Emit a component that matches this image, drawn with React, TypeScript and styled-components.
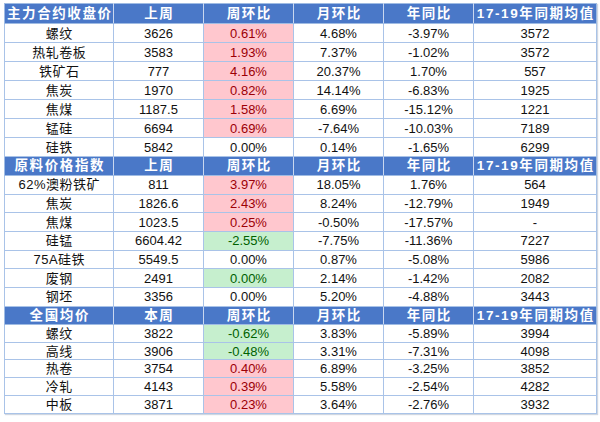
import React from 'react';
import styled, { createGlobalStyle } from 'styled-components';

type Tone = 'up' | 'down' | 'none';

interface Row {
  name: string;
  last: string;
  week: string;
  tone: Tone;
  month: string;
  year: string;
  avg: string;
}

interface Section {
  title: string;
  lastLabel: string;
  headH: number;
  rowH: number;
  rows: Row[];
}

const r = (
  name: string,
  last: string,
  week: string,
  tone: Tone,
  month: string,
  year: string,
  avg: string,
): Row => ({ name, last, week, tone, month, year, avg });

const sections: Section[] = [
  {
    title: '主力合约收盘价',
    lastLabel: '上周',
    headH: 20,
    rowH: 19,
    rows: [
      r('螺纹', '3626', '0.61%', 'up', '4.68%', '-3.97%', '3572'),
      r('热轧卷板', '3583', '1.93%', 'up', '7.37%', '-1.02%', '3572'),
      r('铁矿石', '777', '4.16%', 'up', '20.37%', '1.70%', '557'),
      r('焦炭', '1970', '0.82%', 'up', '14.14%', '-6.83%', '1925'),
      r('焦煤', '1187.5', '1.58%', 'up', '6.69%', '-15.12%', '1221'),
      r('锰硅', '6694', '0.69%', 'up', '-7.64%', '-10.03%', '7189'),
      r('硅铁', '5842', '0.00%', 'none', '0.14%', '-1.65%', '6299'),
    ],
  },
  {
    title: '原料价格指数',
    lastLabel: '上周',
    headH: 19,
    rowH: 18.7,
    rows: [
      r('62%澳粉铁矿', '811', '3.97%', 'up', '18.05%', '1.76%', '564'),
      r('焦炭', '1826.6', '2.43%', 'up', '8.24%', '-12.79%', '1949'),
      r('焦煤', '1023.5', '0.25%', 'up', '-0.50%', '-17.57%', '-'),
      r('硅锰', '6604.42', '-2.55%', 'down', '-7.75%', '-11.36%', '7227'),
      r('75A硅铁', '5549.5', '0.00%', 'none', '0.87%', '-5.08%', '5986'),
      r('废钢', '2491', '0.00%', 'down', '2.14%', '-1.42%', '2082'),
      r('钢坯', '3356', '0.00%', 'none', '5.20%', '-4.88%', '3443'),
    ],
  },
  {
    title: '全国均价',
    lastLabel: '本周',
    headH: 18,
    rowH: 17.8,
    rows: [
      r('螺纹', '3822', '-0.62%', 'down', '3.83%', '-5.89%', '3994'),
      r('高线', '3906', '-0.48%', 'down', '3.31%', '-7.31%', '4098'),
      r('热卷', '3754', '0.40%', 'up', '6.89%', '-3.25%', '3852'),
      r('冷轧', '4143', '0.39%', 'up', '5.58%', '-2.54%', '4282'),
      r('中板', '3871', '0.23%', 'up', '3.64%', '-2.76%', '3932'),
    ],
  },
];

const GlobalStyle = createGlobalStyle`
  body {
    margin: 0;
    background: #fff;
    font-family: "Liberation Sans", "Noto Sans CJK SC", sans-serif;
  }
`;

const Page = styled.div`
  width: 600px;
  height: 422px;
  padding: 3px 0 0 4px;
  box-sizing: border-box;
`;

const Table = styled.table`
  width: 592px;
  table-layout: fixed;
  border-collapse: collapse;
  border: 1px solid #9fbbe3;
  box-shadow: 1px 1px 1px rgba(120, 140, 170, 0.35);
`;

const HeadRow = styled.tr<{ $h: number }>`
  height: ${(p) => p.$h}px;
  background: #4a78c8;
`;

const HeadCell = styled.th`
  padding: 0;
  color: #fff;
  font-size: 13.5px;
  font-weight: 700;
  letter-spacing: 1.6px;
  text-indent: 1.6px;
  text-align: center;
  white-space: nowrap;
  border-left: 1px solid #c9d7ef;
  border-bottom: 1px solid #9fbbe3;
  line-height: 1;
  &:first-child {
    border-left: none;
  }
`;

const BodyRow = styled.tr<{ $h: number }>`
  height: ${(p) => p.$h}px;
`;

const Cell = styled.td<{ $tone?: Tone }>`
  padding: 0;
  font-size: 13px;
  text-align: center;
  white-space: nowrap;
  line-height: 1;
  border: 1px solid #a9c3e8;
  background: ${(p) =>
    p.$tone === 'up' ? '#ffc7ce' : p.$tone === 'down' ? '#c6efce' : '#fff'};
  color: ${(p) =>
    p.$tone === 'up' ? '#9c0006' : p.$tone === 'down' ? '#006100' : '#111'};
`;

const NameCell = styled(Cell)`
  letter-spacing: 0.5px;
  text-indent: 0.5px;
`;

const widths = [109, 90, 90, 90, 90, 123];

function App() {
  return (
    <Page>
      <GlobalStyle />
      <Table>
        <colgroup>
          {widths.map((w, i) => (
            <col key={i} style={{ width: w }} />
          ))}
        </colgroup>
        <tbody>
          {sections.map((s) => (
            <React.Fragment key={s.title}>
              <HeadRow $h={s.headH}>
                <HeadCell>{s.title}</HeadCell>
                <HeadCell>{s.lastLabel}</HeadCell>
                <HeadCell>周环比</HeadCell>
                <HeadCell>月环比</HeadCell>
                <HeadCell>年同比</HeadCell>
                <HeadCell>17-19年同期均值</HeadCell>
              </HeadRow>
              {s.rows.map((row, i) => (
                <BodyRow key={i} $h={s.rowH}>
                  <NameCell>{row.name}</NameCell>
                  <Cell>{row.last}</Cell>
                  <Cell $tone={row.tone}>{row.week}</Cell>
                  <Cell>{row.month}</Cell>
                  <Cell>{row.year}</Cell>
                  <Cell>{row.avg}</Cell>
                </BodyRow>
              ))}
            </React.Fragment>
          ))}
        </tbody>
      </Table>
    </Page>
  );
}

export default App;
